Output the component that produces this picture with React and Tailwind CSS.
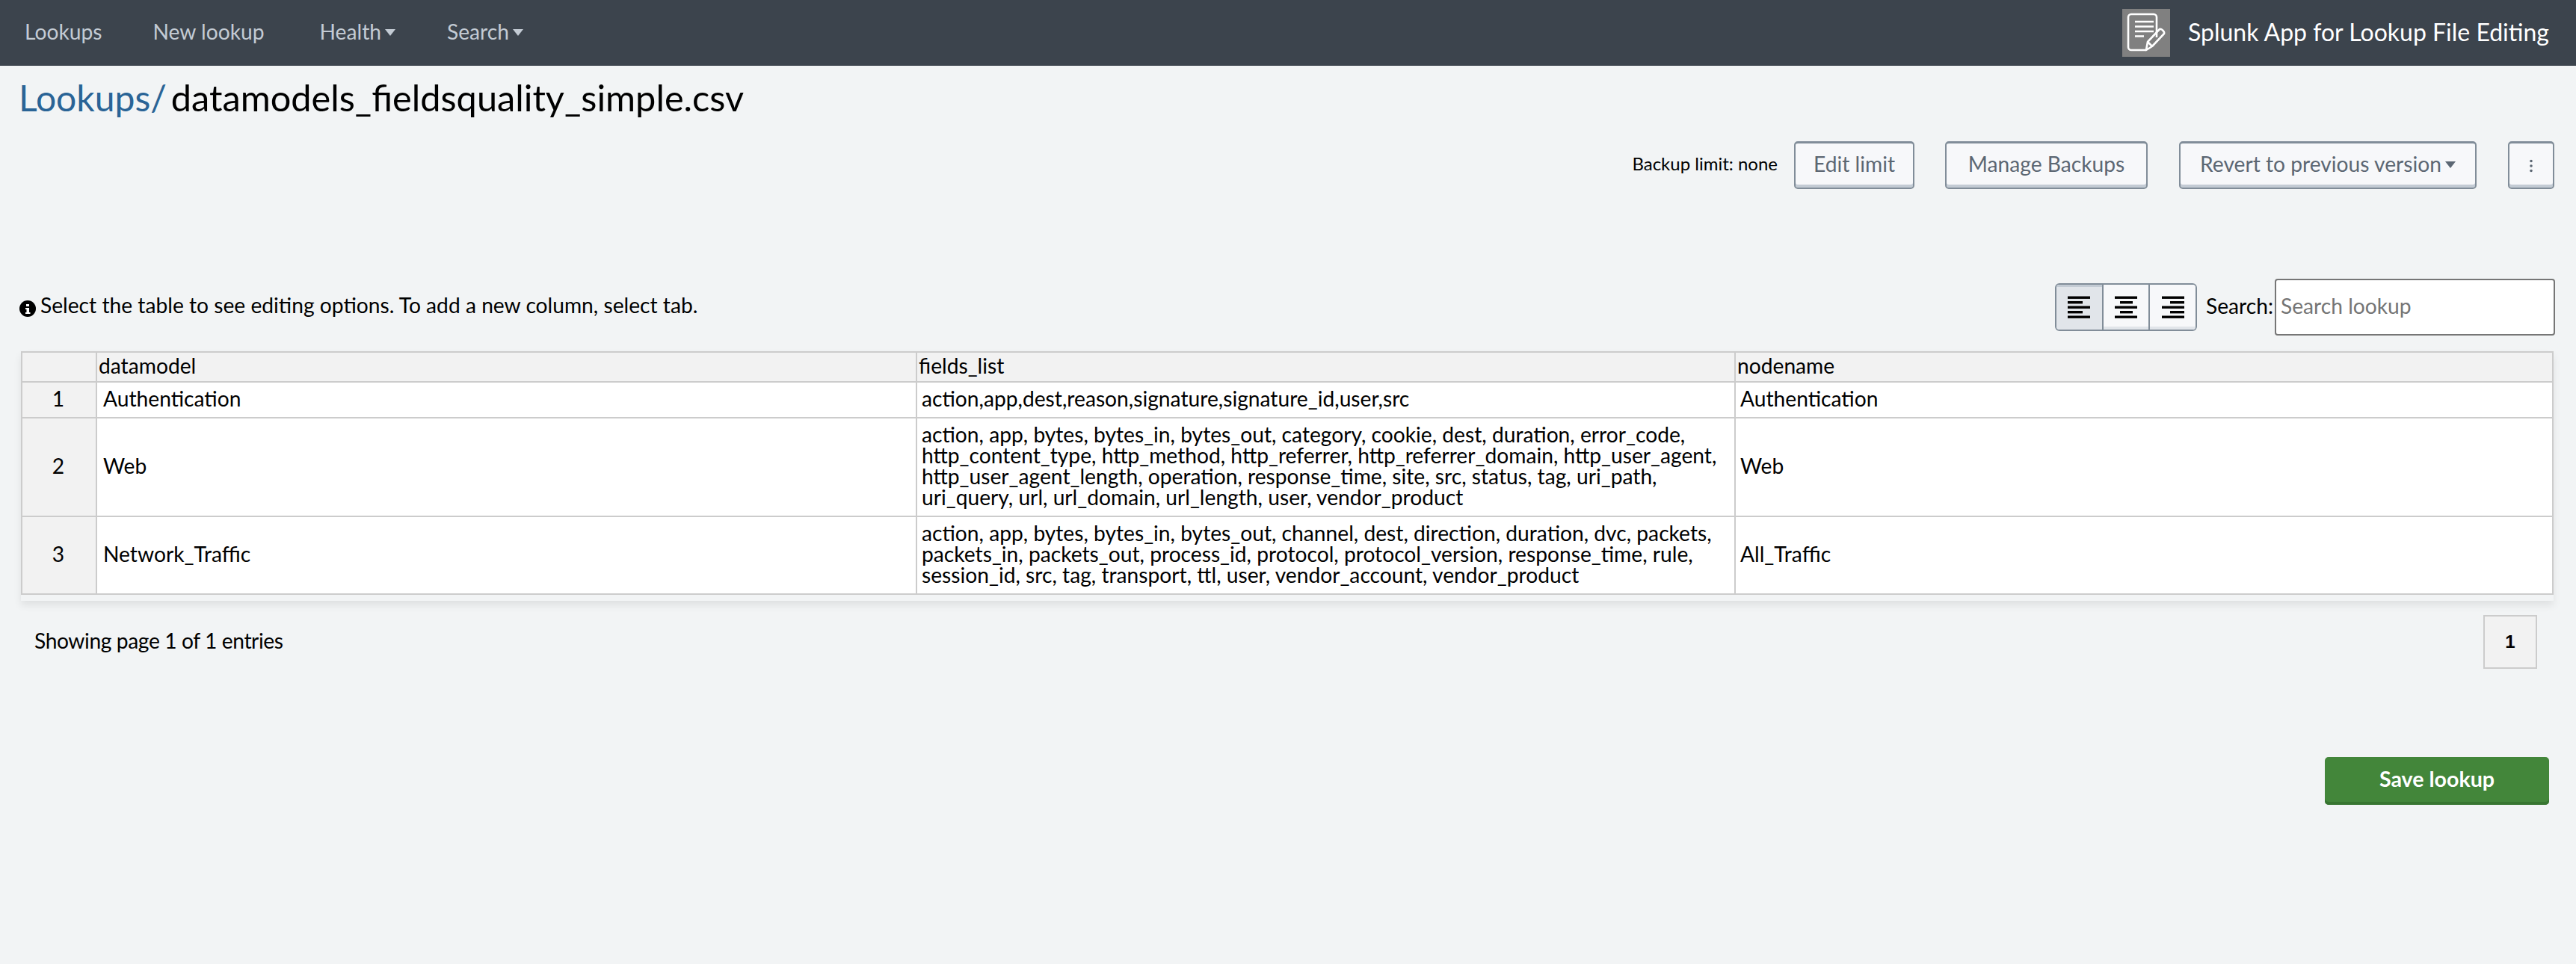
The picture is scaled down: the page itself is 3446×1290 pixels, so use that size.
import React from 'react';

const rows = [
  {
    id: 1,
    datamodel: 'Authentication',
    fields: 'action,app,dest,reason,signature,signature_id,user,src',
    nodename: 'Authentication',
    h: 'h-[48px]',
  },
  {
    id: 2,
    datamodel: 'Web',
    fields:
      'action, app, bytes, bytes_in, bytes_out, category, cookie, dest, duration, error_code, http_content_type, http_method, http_referrer, http_referrer_domain, http_user_agent, http_user_agent_length, operation, response_time, site, src, status, tag, uri_path, uri_query, url, url_domain, url_length, user, vendor_product',
    nodename: 'Web',
    h: 'h-[132px]',
  },
  {
    id: 3,
    datamodel: 'Network_Traffic',
    fields:
      'action, app, bytes, bytes_in, bytes_out, channel, dest, direction, duration, dvc, packets, packets_in, packets_out, process_id, protocol, protocol_version, response_time, rule, session_id, src, tag, transport, ttl, user, vendor_account, vendor_product',
    nodename: 'All_Traffic',
    h: 'h-[104px]',
  },
];

const Caret = () => (
  <svg width="14" height="9" viewBox="0 0 14 9" className="ml-[5px] mt-[3px] fill-current">
    <path d="M0 0h14L7 9z" />
  </svg>
);

const OutlineButton = ({ className = '', children }) => (
  <button className={`flex h-[64px] items-center justify-center rounded-[5px] border-x-2 border-t-[3px] border-b-[2px] border-[#818d99] bg-[#f7f8fa] pb-[5px] text-[28.2px] text-[#5c6773] shadow-[inset_0_-4px_0_#c3cbd4] ${className}`}>
    {children}
  </button>
);

const AlignIcon = ({ bars }) => (
  <svg width="30" height="30" viewBox="0 0 30 30" className="fill-black">
    {bars.map((b, i) => (
      <rect key={i} x={b[0]} y={i * 6.5 + 0.5} width={b[1]} height="3.4" />
    ))}
  </svg>
);

const alignLeft = [[0, 30], [0, 20], [0, 30], [0, 20], [0, 30]];
const alignCenter = [[0, 30], [7, 17], [0, 30], [7, 17], [0, 30]];
const alignRight = [[0, 30], [11, 19], [0, 30], [11, 19], [0, 30]];

const Logo = () => (
  <div className="flex h-[64px] w-[64px] items-center justify-center bg-[#808080]">
    <svg width="64" height="64" viewBox="0 0 64 64" fill="none" stroke="white" strokeWidth="2.6">
      <path d="M32 55H12a4 4 0 0 1-4-4V11a4 4 0 0 1 4-4h30a4 4 0 0 1 4 4v27" strokeLinejoin="round" />
      <path d="M17 17h25M17 23.5h25M17 30h25M17 36.5h12" strokeWidth="2.4" />
      <path d="M32 55l2-11 16-17c2-1 7 3 6 6L40 50z" strokeLinejoin="round" />
      <path d="M34 44l6 6" />
    </svg>
  </div>
);

export default function App() {
  return (
    <div className="h-[1290px] w-[3446px] overflow-hidden bg-[#f2f4f5] font-['Lato',sans-serif] text-[28.2px] text-black">
      <nav className="flex h-[88px] items-center bg-[#3c444d] pl-[33px] pr-[36px] text-[#c3cbd4]">
        <a className="mb-[3px] mr-[68px]">Lookups</a>
        <a className="mb-[3px] mr-[74px]">New lookup</a>
        <a className="mb-[3px] mr-[69px] flex items-center">Health<Caret /></a>
        <a className="mb-[3px] flex items-center">Search<Caret /></a>
        <div className="ml-auto flex items-center gap-[24px]">
          <Logo />
          <span className="mb-[3px] text-[32px] text-white">Splunk App for Lookup File Editing</span>
        </div>
      </nav>

      <h1 className="mt-[16px] pl-[25px] text-[48px] leading-[52px]">
        <span className="mr-[6px] text-[#2a6496]">Lookups/</span>
        <span className="text-[48.7px]">datamodels_fieldsquality_simple.csv</span>
      </h1>

      <div className="mt-[32px] flex items-center justify-end pr-[29px]">
        <span className="mb-[4px] mr-[22px] text-[24px]">Backup limit: none</span>
        <OutlineButton className="mr-[41px] w-[161px]">Edit limit</OutlineButton>
        <OutlineButton className="mr-[42px] w-[271px]">Manage Backups</OutlineButton>
        <OutlineButton className="mr-[42px] w-[398px]">
          Revert to previous version<Caret />
        </OutlineButton>
        <OutlineButton className="w-[62px]">
          <svg width="6" height="18" viewBox="0 0 6 18" className="mt-[5px] fill-[#5c6773]">
            <circle cx="3" cy="2.5" r="1.8" />
            <circle cx="3" cy="9" r="1.8" />
            <circle cx="3" cy="15.5" r="1.8" />
          </svg>
        </OutlineButton>
      </div>

      <div className="mt-[120px] flex h-[76px] items-center pl-[26px] pr-[28px]">
        <svg width="22" height="22" viewBox="0 0 22 22" className="mr-[6px] mt-[3px]">
          <circle cx="11" cy="11" r="11" fill="black" />
          <path d="M9 5h4v3H9zM8 10h5v6h1.5v2h-6.5v-2h1.5v-4H8z" fill="white" />
        </svg>
        <span className="mb-[5px]">Select the table to see editing options. To add a new column, select tab.</span>

        <div className="ml-auto flex h-[64px] w-[190px] overflow-hidden rounded-[6px] border-2 border-[#818d99]">
          <button className="flex flex-1 items-center justify-center bg-[#e1e5ea] shadow-[inset_0_3px_0_#c3cbd4]">
            <AlignIcon bars={alignLeft} />
          </button>
          <button className="flex flex-1 items-center justify-center border-l-2 border-[#818d99] bg-[#f7f8fa] shadow-[inset_0_-4px_0_#e1e5ea]">
            <AlignIcon bars={alignCenter} />
          </button>
          <button className="flex flex-1 items-center justify-center border-l-2 border-[#818d99] bg-[#f7f8fa] shadow-[inset_0_-4px_0_#e1e5ea]">
            <AlignIcon bars={alignRight} />
          </button>
        </div>
        <label className="mb-[3px] ml-[12px] w-[92px] whitespace-nowrap">Search:</label>
        <input
          placeholder="Search lookup"
          className="h-[76px] w-[375px] rounded-[4px] border-2 border-[#767676] bg-white pb-[4px] pl-[6px] text-[28.2px] outline-none placeholder:text-[#757575]"
        />
      </div>

      <div className="ml-[28px] mr-[30px] mt-[21px] bg-[#f2f4f5] pb-[8px] shadow-[0_6px_10px_rgba(0,0,0,0.08)]">
        <table className="w-full table-fixed border-collapse leading-[28px]">
          <colgroup>
            <col className="w-[100px]" />
            <col className="w-[1097px]" />
            <col className="w-[1095px]" />
            <col />
          </colgroup>
          <thead>
            <tr className="h-[40px] bg-[#f2f2f2] text-left">
              <th className="border-2 border-[#cccccc] font-normal"></th>
              <th className="border-2 border-[#cccccc] pb-[5px] pl-[2px] font-normal">datamodel</th>
              <th className="border-2 border-[#cccccc] pb-[5px] pl-[2px] font-normal">fields_list</th>
              <th className="border-2 border-[#cccccc] pb-[5px] pl-[2px] font-normal">nodename</th>
            </tr>
          </thead>
          <tbody>
            {rows.map(row => (
              <tr key={row.id} className={row.h}>
                <td className="border-2 border-[#cccccc] bg-[#f2f2f2] pb-[5px] pr-[2px] text-center">{row.id}</td>
                <td className="border-2 border-[#cccccc] bg-white pb-[5px] pl-[8px] pr-[6px]">{row.datamodel}</td>
                <td className="border-2 border-[#cccccc] bg-white pb-[5px] px-[6px]">{row.fields}</td>
                <td className="border-2 border-[#cccccc] bg-white pb-[5px] px-[6px]">{row.nodename}</td>
              </tr>
            ))}
          </tbody>
        </table>
      </div>

      <div className="mt-[19px] flex items-center pl-[46px] pr-[52px]">
        <span className="mb-[4px] tracking-[-0.4px]">Showing page 1 of 1 entries</span>
        <div className="ml-auto flex h-[72px] w-[72px] items-center justify-center border-2 border-[#cccccc] bg-[#f2f2f2] font-['Liberation_Sans',sans-serif] text-[24px] font-bold">
          1
        </div>
      </div>

      <div className="mt-[118px] flex justify-end pr-[36px]">
        <button className="h-[64px] w-[300px] rounded-[5px] bg-[#43863a] pb-[5px] text-[28.6px] font-bold text-white shadow-[inset_0_-4px_0_#387531]">
          Save lookup
        </button>
      </div>
    </div>
  );
}
